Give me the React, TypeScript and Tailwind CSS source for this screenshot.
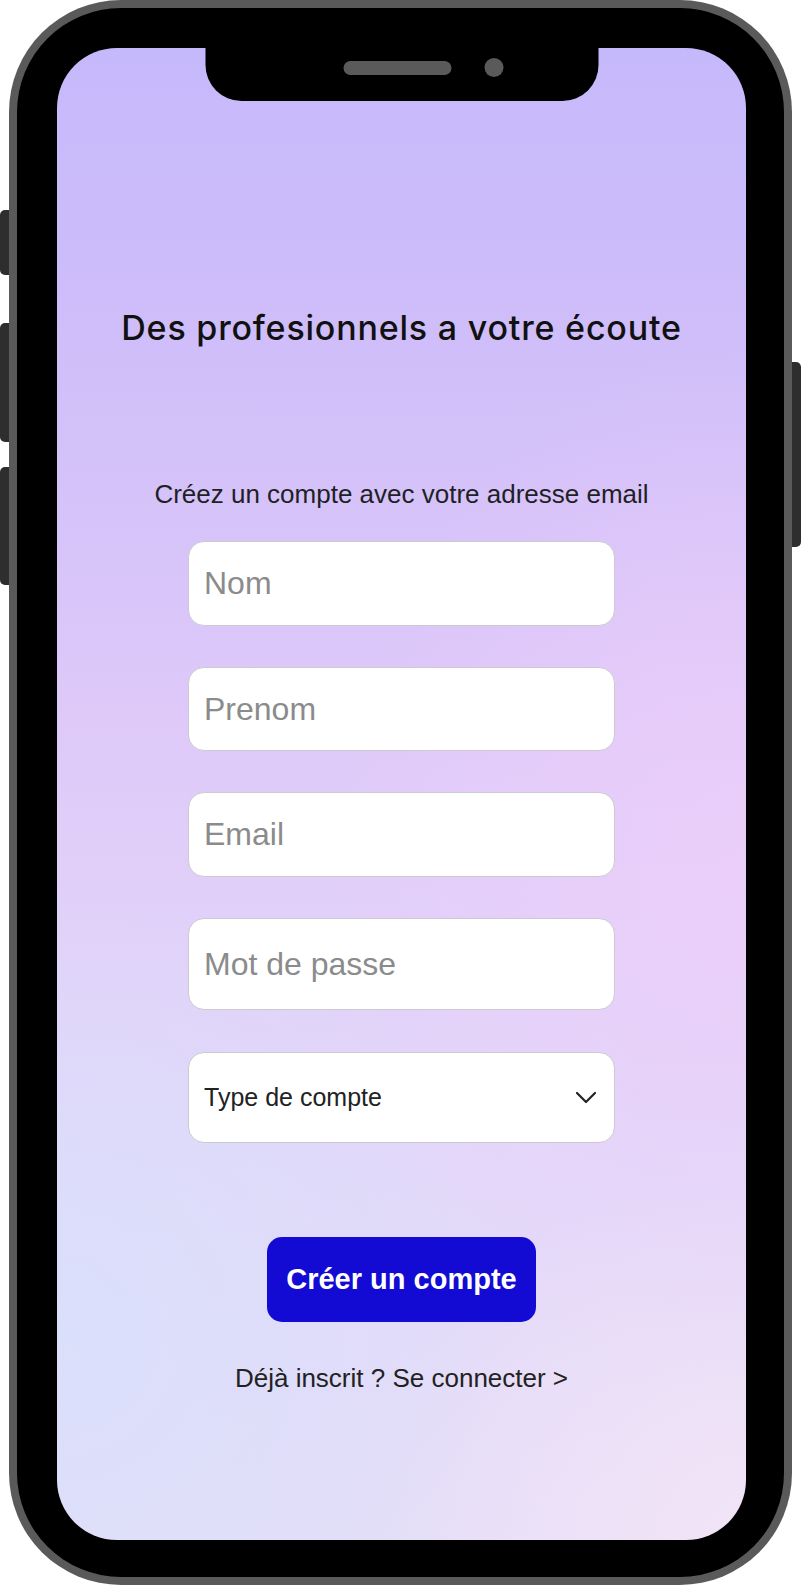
import { useState } from "react";

const fields = [
  { name: "nom", placeholder: "Nom", type: "text", h: "h-[85px]" },
  { name: "prenom", placeholder: "Prenom", type: "text", h: "h-[84px]" },
  { name: "email", placeholder: "Email", type: "email", h: "h-[85px]" },
  { name: "password", placeholder: "Mot de passe", type: "password", h: "h-[92px]" },
];

function Chevron() {
  return (
    <svg width="22" height="13" viewBox="0 0 22 13" fill="none" className="pointer-events-none">
      <path d="M2 2 L11 11 L20 2" stroke="#222" strokeWidth="2.2" strokeLinecap="round" strokeLinejoin="round" />
    </svg>
  );
}

export default function App() {
  const [values, setValues] = useState<Record<string, string>>({});

  return (
    <div className="w-[801px] h-[1586px] bg-white font-['Liberation_Sans',Arial,sans-serif]">
      <div className="relative ml-[9px] w-[783px] h-[1585px] rounded-[112px] bg-[#5a5a5a] p-[8px]">
        {/* side buttons */}
        <div className="absolute left-[-9px] top-[210px] h-[65px] w-[9px] rounded-l-[5px] bg-[#2e2e2e]" />
        <div className="absolute left-[-9px] top-[323px] h-[119px] w-[9px] rounded-l-[5px] bg-[#2e2e2e]" />
        <div className="absolute left-[-9px] top-[467px] h-[118px] w-[9px] rounded-l-[5px] bg-[#2e2e2e]" />
        <div className="absolute right-[-9px] top-[362px] h-[185px] w-[9px] rounded-r-[5px] bg-[#2e2e2e]" />

        <div className="h-full rounded-[104px] bg-black pt-[40px] pb-[37px] pl-[40px] pr-[38px]">
          <div className="relative h-full overflow-hidden rounded-[60px] bg-[image:radial-gradient(ellipse_60%_35%_at_100%_55%,rgba(238,206,250,0.75),rgba(238,206,250,0)),radial-gradient(ellipse_65%_30%_at_0%_86%,rgba(216,224,251,0.85),rgba(216,224,251,0)),radial-gradient(ellipse_55%_25%_at_100%_100%,rgba(243,228,247,1),rgba(243,228,247,0)),linear-gradient(180deg,#c6b9fb_0%,#cdbcfa_15%,#d6c3f9_32%,#dec9f9_45%,#e1d0f9_58%,#e3d9f9_78%,#e4def8_100%)]">
            {/* notch */}
            <div className="absolute left-1/2 top-0 flex h-[53px] w-[393px] -translate-x-1/2 items-start rounded-b-[36px] bg-black">
              <div className="ml-[138px] mt-[13px] h-[14px] w-[108px] rounded-full bg-[#5a5a5a]" />
              <div className="ml-[33px] mt-[10px] h-[19px] w-[19px] rounded-full bg-[#5a5a5a]" />
            </div>

            <div className="flex flex-col items-center pt-[260px]">
              <h1 className="h-[40px] font-['Inter',sans-serif] text-[34px] font-medium leading-[40px] tracking-[0.8px] text-[#111]">
                Des profesionnels a votre écoute
              </h1>
              <p className="mt-[130px] text-[26px] leading-[32px] text-[#1f1f26]">
                Créez un compte avec votre adresse email
              </p>

              <form className="mt-[31px] flex w-[427px] flex-col gap-[41px]" onSubmit={(e) => e.preventDefault()}>
                {fields.map((f) => (
                  <input
                    key={f.name}
                    type={f.type}
                    placeholder={f.placeholder}
                    value={values[f.name] ?? ""}
                    onChange={(e) => setValues({ ...values, [f.name]: e.target.value })}
                    className={`${f.h} w-full rounded-[16px] border border-[#cacad0] bg-white pl-[15px] text-[32px] text-[#222] outline-none placeholder:text-[#8b8b8b]`}
                  />
                ))}
                <button
                  type="button"
                  className="mt-[1px] flex h-[91px] w-full items-center justify-between rounded-[16px] border border-[#cacad0] bg-white pl-[15px] pr-[17px] text-[25px] text-[#222]"
                >
                  <span>Type de compte</span>
                  <Chevron />
                </button>

                <button
                  type="submit"
                  className="mx-auto mt-[53px] h-[85px] w-[269px] rounded-[15px] bg-[#130bd4] text-[29px] font-bold text-white"
                >
                  Créer un compte
                </button>
              </form>

              <p className="mt-[40px] text-[26px] leading-[32px] text-[#222]">Déjà inscrit ? Se connecter &gt;</p>
            </div>
          </div>
        </div>
      </div>
    </div>
  );
}
